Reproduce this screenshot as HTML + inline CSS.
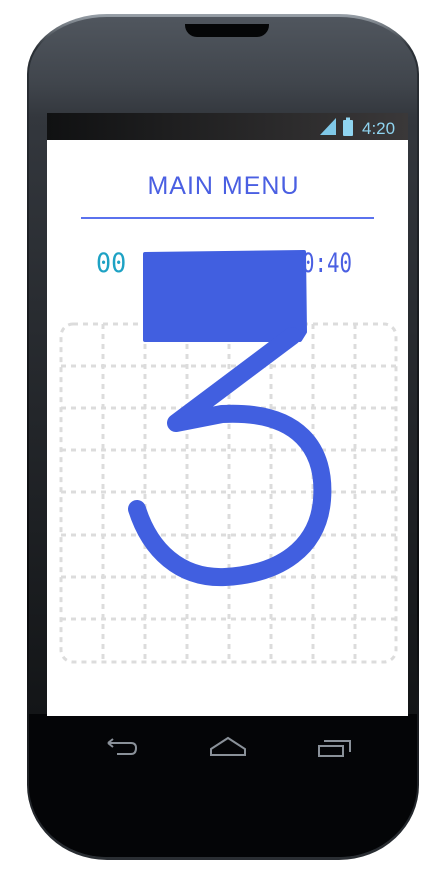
<!DOCTYPE html>
<html><head><meta charset="utf-8"><style>
html,body{margin:0;padding:0;background:#fff;width:445px;height:877px;overflow:hidden;position:relative;font-family:"Liberation Sans",sans-serif}
.phone{position:absolute;left:27px;top:14px;width:392px;height:846px;border-radius:80px 80px 80px 80px / 60px 60px 75px 75px;background:linear-gradient(180deg,#9aa2aa 0%,#2b3036 4%,#1b1e22 30%,#08090b 70%,#2a2e33 100%);}
.inner{position:absolute;left:2px;top:3px;right:2px;bottom:3px;border-radius:78px 78px 78px 78px / 57px 57px 72px 72px;background:linear-gradient(180deg,#50565e 0%,#40454c 8%,#33373d 12%,#121416 85%,#020304 100%);}
.lower{position:absolute;left:2px;right:2px;top:700px;bottom:3px;border-radius:0 0 78px 78px / 0 0 72px 72px;background:#040507}
.ear{position:absolute;left:185px;top:24px;width:84px;height:13px;background:#050607;border-radius:0 0 12px 12px}
.status{position:absolute;left:47px;top:113px;width:361px;height:27px;background:linear-gradient(90deg,#101112,#3a3839)}
.screen{position:absolute;left:47px;top:140px;width:361px;height:576px;background:#fff}
.title{position:absolute;left:0;width:100%;top:172px;text-align:center;color:#4a5fe2;font-size:25px;letter-spacing:1px;padding-left:2px;box-sizing:border-box}
.line{position:absolute;left:81px;top:217px;width:293px;height:1.5px;background:#5b72ee}
.t{position:absolute;top:248px;font-family:"DejaVu Sans Mono",monospace;font-size:27px;transform-origin:0 0}
</style></head><body>
<div class="phone"><div class="inner"></div><div class="lower"></div></div>
<div class="ear"></div>
<div class="status"></div>
<svg style="position:absolute;left:318px;top:116px" width="92" height="22">
<polygon points="2,19 18,2 18,19" fill="#7fc8e8"/>
<rect x="25" y="4" width="10" height="16" rx="1" fill="#8fd4f0"/><rect x="28" y="1.5" width="4" height="3" fill="#8fd4f0"/>
<text x="44" y="18" font-family="Liberation Sans" font-size="17" fill="#8fd4f0">4:20</text>
</svg>
<div class="screen"></div>
<div class="title">MAIN MENU</div>
<div class="line"></div>
<div class="t" style="left:96px;color:#1ea2c4;transform:scaleX(0.93)">00</div>
<div class="t" style="left:302px;color:#4a5fe2;transform:scaleX(0.77)">0:40</div>
<svg style="position:absolute;left:0;top:0" width="445" height="877">
<g stroke="#dcdcdc" stroke-width="3" stroke-dasharray="5 5" fill="none">
<rect x="61" y="324" width="335" height="338" rx="12"/>
<path d="M103 324V662M145 324V662M187 324V662M229 324V662M271 324V662M313 324V662M355 324V662"/>
<path d="M61 366H396M61 408H396M61 450H396M61 492H396M61 535H396M61 577H396M61 619H396"/>
</g>
<g fill="#415fe0" stroke="#415fe0" stroke-linejoin="round" stroke-linecap="round">
<path d="M145 254 L304 252 L305 332 L300 340 L145 340 Z" stroke-width="4"/>
<path d="M292 336 L176 423 L222 414 C300 410 326 450 322 500 C318 548 280 574 225 577 C180 579 150 550 137 509" fill="none" stroke-width="18"/>
</g>
<g stroke="#8a9199" stroke-width="2" fill="none">
<path d="M108 743 L113 739 M108 743 L113 747 M108 743 L131 743 Q136 743 136 748 Q136 754 131 754 L117 754"/>
<path d="M211 749 L228 738 L245 749 L245 755 L211 755 Z"/>
<path d="M319 746 H343 V756 H319 Z M324 741 H350 V752"/>
</g>
</svg>
</body></html>
